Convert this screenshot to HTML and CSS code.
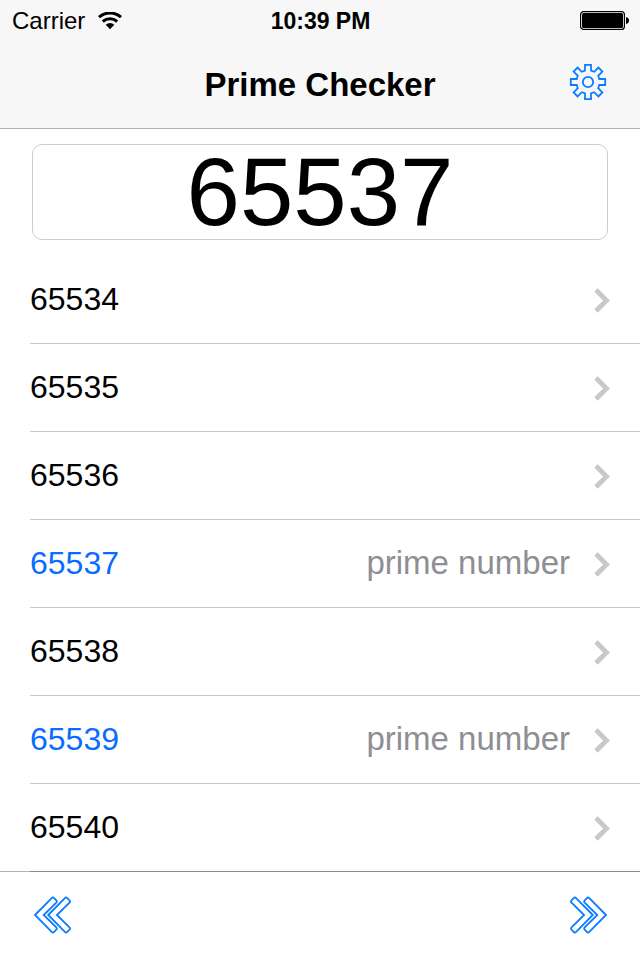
FILE: index.html
```html
<!DOCTYPE html>
<html lang="en">
<head>
<meta charset="utf-8">
<meta name="viewport" content="width=device-width">
<title>Prime Checker</title>
<link rel="stylesheet" href="styles.css">
</head>
<body>
<div class="app">
  <header class="top">
    <div class="status">
      <div class="carrier">
        <span>Carrier</span>
        <svg class="wifi" viewBox="0 0 26 18" aria-hidden="true">
          <g fill="none" stroke="#000" stroke-width="3">
            <path d="M2 5.200a16.500 16.500 0 0 1 22 0"/>
            <path d="M5.800 9.500a11 11 0 0 1 14.400 0"/>
          </g>
          <path d="M8.700 12.700a6.200 6.200 0 0 1 8.600 0L13 17.300z"/>
        </svg>
      </div>
      <span class="time">10:39 PM</span>
      <svg class="battery" viewBox="0 0 49 19" role="img" aria-label="Battery full">
        <rect x=".6" y=".6" width="43.8" height="17.8" rx="3" fill="#fff" stroke="#000" stroke-width="1.2"/>
        <rect x="2" y="2" width="41" height="15" rx="1.5"/>
        <path d="M46 6c2 .5 3 1.800 3 3.500s-1 3-3 3.500z"/>
      </svg>
    </div>
    <div class="titlebar">
      <h1 class="title">Prime Checker</h1>
      <button class="icon-button" type="button" aria-label="Settings">
        <svg class="icon" viewBox="-19 -19 38 38">
          <path d="M-3-11.300V-17.200H3V-11.300L6.200-10.200 10.400-14.400 14.400-10.400 10.200-6.200 11.300-3H17.200V3H11.300L10.200 6.200 14.400 10.400 10.400 14.400 6.200 10.200 3 11.300V17.200H-3V11.300L-6.200 10.200-10.400 14.400-14.400 10.400-10.200 6.200-11.300 3H-17.200V-3H-11.300L-10.200-6.200-14.400-10.400-10.400-14.400-6.200-10.200Z"/>
          <circle r="5.200"/>
        </svg>
      </button>
    </div>
  </header>
  <main class="content">
    <div class="entry">
      <input class="number" type="text" inputmode="numeric" aria-label="Number to check" value="65537">
    </div>
    <ul class="list">
      <li><a class="row" href="#65534"><span>65534</span><svg class="chevron" viewBox="0 0 18 28"><path d="M2 5 12.500 15.500 2 26"/></svg></a></li>
      <li><a class="row" href="#65535"><span>65535</span><svg class="chevron" viewBox="0 0 18 28"><path d="M2 5 12.500 15.500 2 26"/></svg></a></li>
      <li><a class="row" href="#65536"><span>65536</span><svg class="chevron" viewBox="0 0 18 28"><path d="M2 5 12.500 15.500 2 26"/></svg></a></li>
      <li><a class="row prime" href="#65537"><span>65537</span><span class="detail">prime number</span><svg class="chevron" viewBox="0 0 18 28"><path d="M2 5 12.500 15.500 2 26"/></svg></a></li>
      <li><a class="row" href="#65538"><span>65538</span><svg class="chevron" viewBox="0 0 18 28"><path d="M2 5 12.500 15.500 2 26"/></svg></a></li>
      <li><a class="row prime" href="#65539"><span>65539</span><span class="detail">prime number</span><svg class="chevron" viewBox="0 0 18 28"><path d="M2 5 12.500 15.500 2 26"/></svg></a></li>
      <li><a class="row" href="#65540"><span>65540</span><svg class="chevron" viewBox="0 0 18 28"><path d="M2 5 12.500 15.500 2 26"/></svg></a></li>
    </ul>
  </main>
  <footer class="toolbar">
    <button class="icon-button" type="button" aria-label="Previous numbers">
      <svg class="icon" viewBox="0 0 38 38">
        <path d="M2 19 18.700 2.100Q19.900 .9 21.100 2.100L23.300 4.300Q24.500 5.500 23.300 6.700L10.700 19 23.300 31.300Q24.500 32.500 23.300 33.700L21.100 35.900Q19.900 37.100 18.700 35.900Z"/>
        <path d="M15.200 19 31.900 2.100Q33.100 .9 34.300 2.100L36.500 4.300Q37.700 5.500 36.500 6.700L23.900 19 36.500 31.300Q37.700 32.500 36.500 33.700L34.300 35.900Q33.100 37.100 31.900 35.900Z"/>
      </svg>
    </button>
    <button class="icon-button" type="button" aria-label="Next numbers">
      <svg class="icon" viewBox="0 0 38 38">
        <g transform="matrix(-1 0 0 1 38 0)">
          <path d="M2 19 18.700 2.100Q19.900 .9 21.100 2.100L23.300 4.300Q24.500 5.500 23.300 6.700L10.700 19 23.300 31.300Q24.500 32.500 23.300 33.700L21.100 35.900Q19.900 37.100 18.700 35.900Z"/>
          <path d="M15.200 19 31.900 2.100Q33.100 .9 34.300 2.100L36.500 4.300Q37.700 5.500 36.500 6.700L23.900 19 36.500 31.300Q37.700 32.500 36.500 33.700L34.300 35.900Q33.100 37.100 31.900 35.900Z"/>
        </g>
      </svg>
    </button>
  </footer>
</div>
</body>
</html>
```
FILE: styles.css
```css
* {
  box-sizing: border-box;
}

body {
  margin: 0;
  background: #fff;
  color: #000;
  font-family: "Liberation Sans", Arial, sans-serif;
}

.app {
  display: flex;
  flex-direction: column;
  min-height: 100vh;
}

.top {
  background: #f7f7f7;
  border-bottom: 1px solid #b2b2b2;
}

.status {
  display: grid;
  grid-template-columns: 1fr auto 1fr;
  align-items: center;
  height: 41px;
  padding: 0 11px 0 12px;
  font-size: 24px;
  line-height: 40px;
}

.carrier {
  display: flex;
  align-items: center;
  gap: 12px;
}

.wifi {
  width: 26px;
  height: 18px;
}

.time {
  font-size: 23px;
  font-weight: bold;
}

.battery {
  width: 49px;
  height: 19px;
  justify-self: end;
}

.titlebar {
  display: grid;
  grid-template-columns: 1fr auto 1fr;
  align-items: start;
  height: 87px;
  padding: 0 33px;
}

.title {
  grid-column: 2;
  margin: 0;
  font-size: 33px;
  line-height: 87px;
}

.titlebar .icon-button {
  justify-self: end;
  margin-top: 22px;
}

.icon-button {
  display: block;
  padding: 0;
  border: 0;
  background: none;
  cursor: pointer;
}

.icon {
  display: block;
  width: 38px;
  height: 38px;
  fill: none;
  stroke: #0a7cff;
  stroke-width: 1.8;
  overflow: visible;
}

.content {
  flex: 1;
}

.entry {
  padding: 15px 32px 16px;
}

.number {
  display: block;
  width: 100%;
  height: 96px;
  padding: 0;
  border: 1px solid #ccc;
  border-radius: 10px;
  background: #fff;
  color: #000;
  font-family: inherit;
  font-size: 96px;
  line-height: 94px;
  text-align: center;
}

.list {
  margin: 0;
  padding: 0 0 0 30px;
  list-style: none;
}

.row {
  display: flex;
  align-items: center;
  height: 88px;
  padding: 0 28px 2px 0;
  border-bottom: 1px solid #c8c7cc;
  color: #000;
  font-size: 32px;
  line-height: 36px;
  text-decoration: none;
}

.prime {
  color: #0a6cff;
}

.detail {
  margin-left: auto;
  color: #8e8e93;
  font-size: 33px;
}

.chevron {
  width: 18px;
  height: 28px;
  margin-left: auto;
  fill: none;
  stroke: #c7c7cc;
  stroke-width: 4.8;
}

.detail + .chevron {
  margin-left: 24px;
}

.toolbar {
  display: flex;
  align-items: center;
  justify-content: space-between;
  height: 89px;
  margin-top: -1px;
  padding: 0 32px 2px 33px;
  border-top: 1px solid rgba(0, 0, 0, 0.3);
}
```
